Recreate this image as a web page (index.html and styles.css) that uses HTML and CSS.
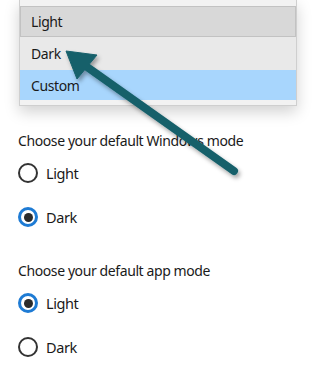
FILE: index.html
```html
<!DOCTYPE html>
<html>
<head>
<meta charset="utf-8">
<link rel="stylesheet" href="styles.css">
</head>
<body>
<div class="page">
  <div class="menu">
    <div class="item item-light">Light</div>
    <div class="item item-dark">Dark</div>
    <div class="item item-custom">Custom</div>
  </div>
  <div class="section first">
    <div class="heading">Choose your default Windows mode</div>
    <div class="radio"><span class="circle"></span><span class="label">Light</span></div>
    <div class="radio"><span class="circle checked"></span><span class="label">Dark</span></div>
  </div>
  <div class="section second">
    <div class="heading">Choose your default app mode</div>
    <div class="radio"><span class="circle checked"></span><span class="label">Light</span></div>
    <div class="radio"><span class="circle"></span><span class="label">Dark</span></div>
  </div>
  <svg class="arrow" width="321" height="375" viewBox="0 0 321 375">
    <defs>
      <filter id="sh" x="-20%" y="-20%" width="140%" height="140%">
        <feDropShadow dx="2" dy="3" stdDeviation="2" flood-color="#000" flood-opacity="0.35"/>
      </filter>
    </defs>
    <g filter="url(#sh)" fill="#17606b" stroke="#17606b">
      <line x1="80" y1="62" x2="234" y2="171" stroke-width="8" stroke-linecap="round"/>
      <polygon points="66,51 97,55 77,79" stroke-width="1" stroke-linejoin="round"/>
    </g>
  </svg>
</div>
</body>
</html>
```
FILE: styles.css
```css
html, body {
  margin: 0;
  padding: 0;
  background: #ffffff;
}
body {
  font-family: "Noto Sans", "Open Sans", sans-serif;
  font-size: 14px;
  letter-spacing: -0.4px;
  color: #1a1a1a;
}
.page {
  position: relative;
  width: 321px;
  height: 375px;
  overflow: hidden;
}
.menu {
  margin-left: 19px;
  width: 276px;
  padding: 6px 0 5px;
  background: #f2f2f2;
  border: 1px solid #cfcfcf;
  border-top: none;
  box-shadow: 0 6px 14px rgba(0, 0, 0, 0.18);
}
.item {
  padding-left: 11px;
  display: flex;
  align-items: center;
}
.item-light {
  height: 29px;
  background: #d8d8d8;
  border: 1px solid #c2c2c2;
  padding-left: 10px;
}
.item-dark {
  height: 33px;
  background: #e9e9e9;
}
.item-custom {
  height: 30px;
  background: #a8d6fd;
}
.section {
  margin-left: 18px;
}
.section.first {
  margin-top: 25px;
}
.section.second {
  margin-top: 34px;
}
.heading {
  height: 20px;
  line-height: 20px;
}
.radio {
  display: flex;
  align-items: center;
  height: 20px;
  margin-top: 24px;
}
.heading + .radio {
  margin-top: 12px;
}
.circle {
  box-sizing: border-box;
  width: 20px;
  height: 20px;
  border-radius: 50%;
  border: 2px solid #333333;
  display: flex;
  align-items: center;
  justify-content: center;
}
.circle.checked {
  border: 3px solid #1e7bd4;
}
.circle.checked::after {
  content: "";
  width: 9px;
  height: 9px;
  border-radius: 50%;
  background: #2b2b2b;
}
.label {
  margin-left: 8px;
  font-size: 14.5px;
}
.arrow {
  position: absolute;
  left: 0;
  top: 0;
  pointer-events: none;
}
```
